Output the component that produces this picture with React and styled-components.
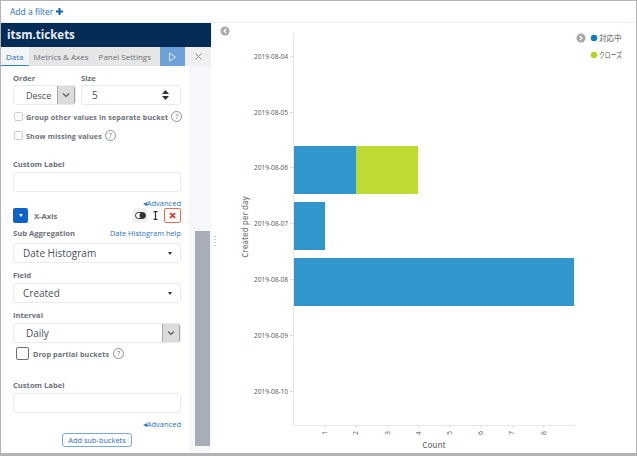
import React from "react";
import styled, { createGlobalStyle } from "styled-components";

const Global = createGlobalStyle`
  html, body { margin: 0; padding: 0; background: #fff; }
  body { font-family: "Open Sans", "Noto Sans CJK JP", sans-serif; }
`;

const Frame = styled.div`
  width: 637px; height: 456px; box-sizing: border-box; overflow: hidden;
  border: 1px solid #b4b4b4; border-width: 1px 1px 3px 1px;
  display: flex; flex-direction: column; background: #fff;
`;
const FilterBar = styled.div`
  height: 22px; flex: none; box-sizing: border-box; padding-left: 9px;
  display: flex; align-items: center; gap: 3px;
  font-size: 8.5px; color: #1f6fc4; background: #fff;
  border-bottom: 1px solid #eef1f8;
`;
const Main = styled.div` flex: 1; display: flex; min-height: 0; `;
const Sidebar = styled.div` width: 210px; flex: none; display: flex; flex-direction: column; `;
const Title = styled.div`
  height: 24px; flex: none; box-sizing: border-box; background: #032c57; color: #e8edf3;
  font-size: 11.5px; font-weight: 700; line-height: 23px; padding-left: 6px;
`;
const Tabs = styled.div` height: 19px; flex: none; display: flex; background: #e6e6e6; `;
const Tab = styled.div`
  font-size: 8px; line-height: 19px; box-sizing: border-box; height: 19px; white-space: nowrap;
  padding: 0 5px;
  color: ${p => p.$active ? "#1f6fb8" : "#6a7078"};
  border-bottom: ${p => p.$active ? "1px solid #2a7fd0" : "none"};
  background: ${p => p.$active ? "#f3f5f7" : "transparent"};
`;
const Run = styled.div`
  width: 25px; flex: none; margin-left: auto; background: #6ea1d8;
  display: flex; align-items: center; justify-content: center;
`;
const Close = styled.div`
  width: 26px; flex: none; display: flex; align-items: center; justify-content: center; background: #f0f0f0;
`;
const Below = styled.div` flex: 1; display: flex; min-height: 0; `;
const Form = styled.div`
  width: 188px; flex: none; box-sizing: border-box; padding: 0 8px 0 12px; background: #fff;
`;
const Rail = styled.div`
  flex: 1; background: #f5f7fa; padding: 165px 0 7px 6px; display: flex;
`;
const Thumb = styled.div` width: 15px; background: #a9adb7; `;
const Label = styled.div`
  font-size: 7.6px; font-weight: 700; color: #6b7179; line-height: 10px;
  margin-top: ${p => p.$mt || 0}px;
`;
const Row = styled.div`
  display: flex; gap: ${p => p.$gap || 0}px; margin-top: ${p => p.$mt || 0}px;
  margin-left: ${p => p.$ml || 0}px;
  align-items: ${p => p.$align || "flex-start"}; justify-content: ${p => p.$justify || "flex-start"};
`;
const Col = styled.div` width: ${p => p.$w}px; flex: none; `;
const Control = styled.div`
  height: 20px; box-sizing: border-box; border: 1px solid #e7eaf0; border-radius: 3px; background: #fff;
  margin-top: ${p => p.$mt ?? 3}px; display: flex; align-items: center; justify-content: space-between;
  font-size: ${p => p.$fs || 10}px; color: #4a5058; padding-left: ${p => p.$pl ?? 9}px;
`;
const Stepper = styled.div` width: 14px; margin-right: 8px; display: flex; justify-content: center; `;
const Chevron = styled.div`
  width: 16px; height: 18px; background: #dcdcdc; border-left: 1px solid #a8a8a8; border-right: 1px solid #a0a0a0;
  border-radius: 0 3px 3px 0; display: flex; align-items: center; justify-content: center; flex: none;
`;
const Caret = styled.span`
  width: 0; height: 0; border: 2.5px solid transparent; border-top: 3px solid #333; border-bottom: 0;
  margin-right: 8px;
`;
const Check = styled.span`
  box-sizing: border-box;
  width: ${p => p.$size || 9}px; height: ${p => p.$size || 9}px; flex: none; background: #fff;
  border: 1px solid ${p => p.$dark ? "#707070" : "#c9ccd2"}; border-radius: 2px;
`;
const CheckText = styled.span` font-size: 7.2px; font-weight: 700; color: #6b7179; line-height: 10px; letter-spacing: .12px; white-space: nowrap; `;
const Help = styled.span`
  width: 9px; height: 9px; border: 1px solid #8a9097; border-radius: 50%; flex: none;
  font-size: 7px; line-height: 9px; text-align: center; color: #6b7179;
`;
const Link = styled.div`
  font-size: 7.5px; line-height: 10px; color: #2a74c4; text-align: right;
  margin-top: ${p => p.$mt || 0}px;
`;
const LinkInline = styled.span` font-size: 7.4px; line-height: 10px; color: #2a74c4; white-space: nowrap; `;
const Toggle = styled.div`
  width: 15px; height: 15px; background: #0f62c8; border-radius: 2px;
  display: flex; align-items: center; justify-content: center; flex: none;
`;
const ToggleCaret = styled.span`
  width: 0; height: 0; border: 2.5px solid transparent; border-top: 3px solid #fff; border-bottom: 0;
`;
const AxisName = styled.span` font-size: 7.6px; font-weight: 700; color: #6b7179; margin-left: 6px; flex: 1; `;
const Tool = styled.div`
  height: 15px; width: ${p => p.$w}px; flex: none; box-sizing: border-box;
  display: flex; align-items: center; justify-content: center;
  background: ${p => p.$bg || "transparent"}; border-radius: 2px;
  border: ${p => p.$danger ? "1px solid #e0704f" : "none"};
`;
const AddWrap = styled.div` display: flex; justify-content: flex-end; padding-right: 49px; margin-top: 4px; `;
const AddButton = styled.div`
  width: 70px; height: 14px; box-sizing: border-box; border: 1px solid #79a8e2; border-radius: 3px;
  font-size: 7.4px; line-height: 12px; text-align: center; color: #2a6fc0;
`;
const ChartPanel = styled.div` flex: 1; position: relative; min-width: 0; `;
const Plot = styled.svg` display: block; `;
const Handle = styled.div`
  position: absolute; left: 3px; top: 213px; width: 2px; height: 10px;
  background: repeating-linear-gradient(#c4c7cc 0 1px, transparent 1px 3px);
`;

const dates = [
  ["2019-08-04", 56], ["2019-08-05", 112], ["2019-08-06", 167], ["2019-08-07", 223],
  ["2019-08-08", 279], ["2019-08-09", 335], ["2019-08-10", 391],
];
const counts = [1, 2, 3, 4, 5, 6, 7, 8];
const xOf = n => 294 + n * 31.2;
const OX = 211, OY = 23;

const Select = ({ children, mt }) => (
  <Control $mt={mt}>{children}<Caret /></Control>
);
const NativeSelect = ({ children, pl, fs, mt }) => (
  <Control $pl={pl} $fs={fs} $mt={mt}>{children}<Chevron><svg width="8" height="6" viewBox="0 0 8 6"><path d="M1 1.5 4 4.5 7 1.5" fill="none" stroke="#555" strokeWidth="1.1" /></svg></Chevron></Control>
);

export default function App() {
  return (
    <Frame>
      <Global />
      <FilterBar>
        <span>Add a filter</span>
        <svg width="7" height="7" viewBox="0 0 7 7"><path d="M3.5 0V7M0 3.500H7" stroke="#0f5fb8" strokeWidth="2" /></svg>
      </FilterBar>
      <Main>
        <Sidebar>
          <Title>itsm.tickets</Title>
          <Tabs>
            <Tab $active>Data</Tab>
            <Tab>Metrics &amp; Axes</Tab>
            <Tab>Panel Settings</Tab>
            <Run><svg width="9" height="10" viewBox="0 0 9 10"><path d="M1.5 1 7.5 5 1.5 9Z" fill="none" stroke="#e0ebf8" strokeWidth="1" /></svg></Run>
            <Close><svg width="9" height="9" viewBox="0 0 9 9"><path d="M1.5 1.5 7.5 7.5M7.5 1.5 1.5 7.5" stroke="#8b8f94" strokeWidth="1" /></svg></Close>
          </Tabs>
          <Below>
            <Form>
              <Row $gap={5} $mt={7}>
                <Col $w={63}>
                  <Label>Order</Label>
                  <NativeSelect pl={12} fs={9} mt={2}>Desce</NativeSelect>
                </Col>
                <Col $w={100}>
                  <Label>Size</Label>
                  <Control $pl={10} $mt={2}>5
                    <Stepper><svg width="7" height="10" viewBox="0 0 7 10"><path d="M3.5 0 7 4H0ZM3.5 10 0 6H7Z" fill="#333" /></svg></Stepper>
                  </Control>
                </Col>
              </Row>
              <Row $gap={3} $mt={6} $align="center" $ml={1}>
                <Check /><CheckText>Group other values in separate bucket</CheckText><Help>?</Help>
              </Row>
              <Row $gap={3} $mt={8} $align="center" $ml={1}>
                <Check /><CheckText>Show missing values</CheckText><Help>?</Help>
              </Row>
              <Label $mt={18}>Custom Label</Label>
              <Control $mt={3} />
              <Link $mt={6}>◂Advanced</Link>
              <Row $align="center">
                <Toggle><ToggleCaret /></Toggle>
                <AxisName>X-Axis</AxisName>
                <Tool $w={14} $bg="#f0f0f0"><svg width="11" height="7" viewBox="0 0 11 7"><rect x=".5" y=".5" width="10" height="6" rx="3" fill="#fff" stroke="#333" /><circle cx="7.500" cy="3.500" r="3" fill="#333" /></svg></Tool>
                <Tool $w={17}><svg width="5" height="9" viewBox="0 0 5 9"><path d="M2.500 0V9M.5 .7H4.500M.5 8.300H4.500" stroke="#333" strokeWidth="1.200" /></svg></Tool>
                <Tool $w={17} $danger><svg width="7" height="7" viewBox="0 0 7 7"><path d="M1 1 6 6M6 1 1 6" stroke="#e02a1c" strokeWidth="1.700" /></svg></Tool>
              </Row>
              <Row $mt={5} $justify="space-between" $align="center">
                <Label>Sub Aggregation</Label>
                <LinkInline>Date Histogram help</LinkInline>
              </Row>
              <Select mt={5}>Date Histogram</Select>
              <Label $mt={7}>Field</Label>
              <Select mt={3}>Created</Select>
              <Label $mt={7}>Interval</Label>
              <NativeSelect pl={12}>Daily</NativeSelect>
              <Row $gap={4} $mt={4} $align="center" $ml={3}>
                <Check $size={13} $dark />
                <CheckText>Drop partial buckets</CheckText>
                <Help>?</Help>
              </Row>
              <Label $mt={20}>Custom Label</Label>
              <Control $mt={3} />
              <Link $mt={6}>◂Advanced</Link>
              <AddWrap><AddButton>Add sub-buckets</AddButton></AddWrap>
            </Form>
            <Rail><Thumb /></Rail>
          </Below>
        </Sidebar>
        <ChartPanel>
          <Handle />
          <Plot width="425" height="431" viewBox={`${OX} ${OY} 425 431`}>
            <circle cx="225" cy="31" r="4.500" fill="#a8a8a8" />
            <path d="M226.300 28.800 224 31 226.300 33.200" fill="none" stroke="#fff" strokeWidth="1.200" />
            <circle cx="581" cy="38" r="4.500" fill="#a8a8a8" />
            <path d="M579.800 35.800 582 38 579.800 40.200" fill="none" stroke="#fff" strokeWidth="1.200" />
            <circle cx="594" cy="38" r="3.200" fill="#0e7cc4" />
            <circle cx="594" cy="55" r="3.200" fill="#b4d51d" />
            <text x="599" y="41" fontSize="7.500" fill="#555" fontFamily="'Noto Sans CJK JP', sans-serif">対応中</text>
            <text x="599" y="58" fontSize="7.500" fill="#555" textLength="23" lengthAdjust="spacingAndGlyphs" fontFamily="'Noto Sans CJK JP', sans-serif">クローズ</text>
            <path d="M293.500 33V425.500H575" fill="none" stroke="#e6e6e6" />
            {dates.map(([d, y]) => (
              <g key={d}>
                <path d={`M290 ${y + .5}H293`} stroke="#ddd" />
                <text x="288" y={y + 2.500} textAnchor="end" fontSize="6.500" fill="#555" fontFamily="'Open Sans', sans-serif">{d}</text>
              </g>
            ))}
            <rect x="294" y="146" width="62" height="48" fill="#3196cc" />
            <rect x="356" y="146" width="62" height="48" fill="#bedb33" />
            <rect x="294" y="202" width="31" height="48" fill="#3196cc" />
            <rect x="294" y="258" width="280" height="48" fill="#3196cc" />
            {counts.map(n => (
              <g key={n}>
                <path d={`M${xOf(n)} 425V428`} stroke="#ddd" />
                <text transform={`translate(${xOf(n) + 2} 435) rotate(-90)`} fontSize="7" fill="#666" fontFamily="'Open Sans', sans-serif">{n}</text>
              </g>
            ))}
            <text x="434" y="448" textAnchor="middle" fontSize="8" fontWeight="600" fill="#777" fontFamily="'Open Sans', sans-serif">Count</text>
            <text transform="translate(248 227) rotate(-90)" textAnchor="middle" fontSize="8" fontWeight="600" fill="#808080" fontFamily="'Open Sans', sans-serif">Created per day</text>
          </Plot>
        </ChartPanel>
      </Main>
    </Frame>
  );
}
